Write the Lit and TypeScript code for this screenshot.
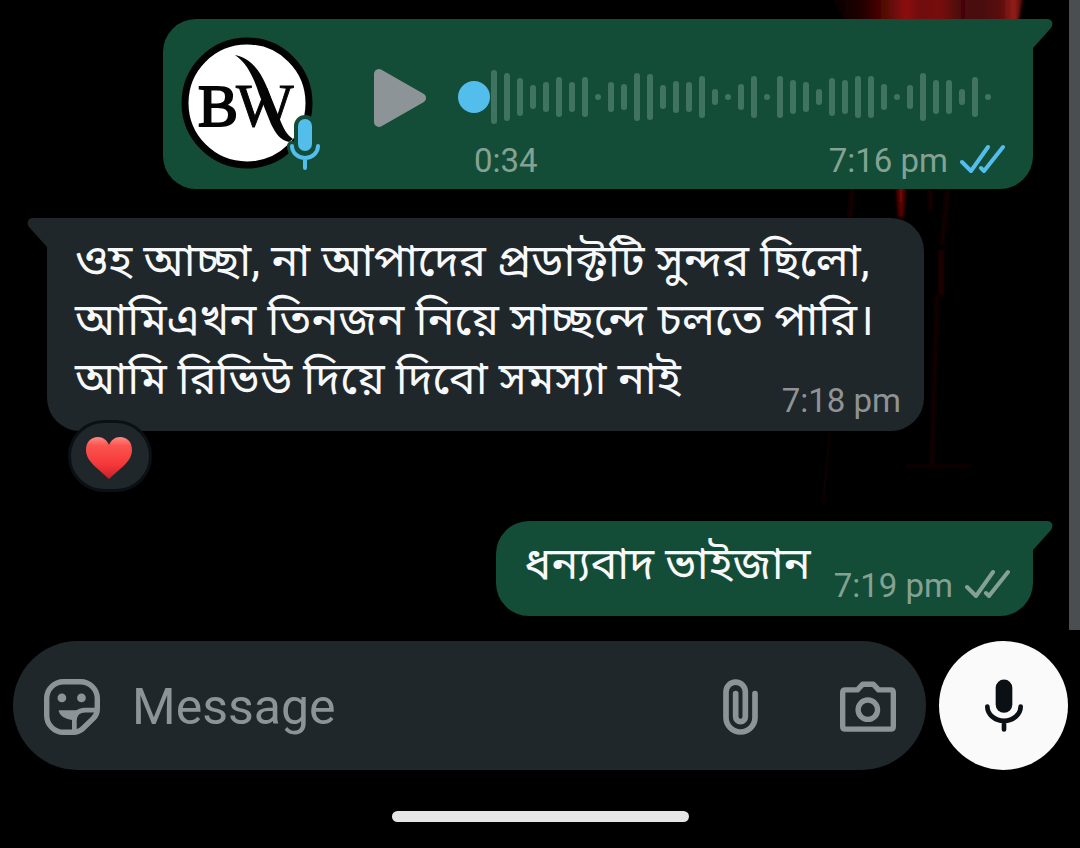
import { LitElement, html, svg, css, nothing } from "lit";
import { customElement, property } from "lit/decorators.js";

const LEVELS = [
  54, 48, 38, 24, 30, 40, 30, 40, 6, 30, 26, 48, 46, 24, 32, 30, 42, 16, 6, 26,
  42, 6, 42, 34, 30, 16, 38, 34, 42, 42, 26, 6, 24, 48, 34, 34, 16, 40, 6,
];

@customElement("message-status")
class MessageStatus extends LitElement {
  @property() time = "";
  @property() receipt = "";

  static styles = css`
    :host {
      display: flex;
      align-items: center;
      gap: 11px;
      font: 33px/40px Roboto, sans-serif;
      color: var(--meta);
      white-space: nowrap;
    }
    .ticks {
      display: block;
      width: 46px;
      height: 30px;
      margin-bottom: 4px;
      fill: none;
      stroke: currentColor;
      stroke-width: 4;
      stroke-linecap: round;
      stroke-linejoin: round;
    }
    .read {
      color: #53bdeb;
    }
  `;

  render() {
    return html`<time>${this.time}</time>
      ${this.receipt
        ? html`<svg class="ticks ${this.receipt}" viewBox="0 0 46 30" role="img" aria-label=${this.receipt}>
            <path d="M3 18L12 27L29 3M22 24L25 27L44 3" />
          </svg>`
        : nothing}`;
  }
}

@customElement("chat-bubble")
class ChatBubble extends LitElement {
  @property({ reflect: true }) side = "in";

  static styles = css`
    :host {
      display: block;
      position: relative;
      box-sizing: border-box;
      max-width: 100%;
      border-radius: 33px;
    }
    :host([side="in"]) {
      --fill: #1f272a;
      --meta: #8f9395;
      background: var(--fill);
      align-self: flex-start;
      border-top-left-radius: 0;
    }
    :host([side="out"]) {
      --fill: #144d37;
      --meta: #84a294;
      background: var(--fill);
      align-self: flex-end;
      border-top-right-radius: 0;
    }
    .tail {
      position: absolute;
      top: 0;
      width: 20px;
      height: 30px;
      fill: var(--fill);
    }
    :host([side="out"]) .tail {
      left: 100%;
    }
    :host([side="in"]) .tail {
      right: 100%;
      transform: scaleX(-1);
    }
  `;

  render() {
    return html`<slot></slot>
      <svg class="tail" viewBox="0 0 20 30" aria-hidden="true">
        <path d="M-1 0H14Q18 0 19 3Q20 6 18 9L0 29H-1Z" />
      </svg>`;
  }
}

@customElement("voice-note")
class VoiceNote extends LitElement {
  static styles = css`
    :host {
      display: flex;
      padding: 18px 28px 8px 18px;
    }
    .avatar {
      flex: none;
      display: block;
      width: 142px;
      height: 136px;
    }
    .mono {
      font-family: "Liberation Serif", serif;
      font-size: 61px;
      fill: #050505;
      stroke: #050505;
      stroke-width: 1;
    }
    .heavy {
      font-size: 60px;
      stroke-width: 2;
    }
    .play {
      flex: none;
      align-self: flex-start;
      width: 54px;
      height: 60px;
      margin: 31px 31px 0 50px;
      padding: 0;
      border: 0;
      background: none;
    }
    .play svg {
      display: block;
      fill: #8c9497;
      stroke: #8c9497;
      stroke-width: 10;
      stroke-linejoin: round;
    }
    .body {
      flex: 1;
      min-width: 0;
      display: flex;
      flex-direction: column;
    }
    .track {
      display: grid;
      align-items: center;
      height: 58px;
      margin: 31px 14px 15px 0;
    }
    .bars,
    .seek {
      grid-area: 1 / 1;
    }
    .bars {
      display: flex;
      align-items: center;
      justify-content: space-between;
      padding-left: 33px;
    }
    .bar {
      width: 6px;
      border-radius: 3px;
      background: #417460;
    }
    .seek {
      appearance: none;
      width: 100%;
      height: 32px;
      margin: 0;
      background: none;
    }
    .seek::-webkit-slider-thumb {
      appearance: none;
      width: 32px;
      height: 32px;
      border-radius: 50%;
      background: #53bdeb;
    }
    .foot {
      display: flex;
      justify-content: space-between;
      padding-left: 16px;
      font: 33px/40px Roboto, sans-serif;
      color: var(--meta);
    }
  `;

  render() {
    return html`
      <svg class="avatar" viewBox="0 0 142 136" role="img" aria-label="BW">
        <circle cx="66" cy="66" r="62" fill="#fff" stroke="#020202" stroke-width="7" />
        <text class="mono heavy" x="17" y="89">B</text>
        <text class="mono" x="55" y="89">W</text>
        <path d="M54 18C68 21 78 31 85 48L98 80C102 91 106 98 112 102L108 105C99 103 95 97 90 87L78 57C73 41 66 26 54 18Z" fill="#050505" />
        <g fill="none" stroke="#144d37" stroke-linecap="round">
          <path d="M124 89V107" stroke-width="22" />
          <path d="M111 109A13 12 0 0 0 137 109" stroke-width="10" />
          <path d="M124 121V131" stroke-width="6" />
        </g>
        <g fill="none" stroke="#53bdeb" stroke-linecap="round">
          <path d="M124 89V107" stroke-width="14" />
          <path d="M111 109A13 12 0 0 0 137 109M124 121V131" stroke-width="4" />
        </g>
      </svg>
      <button class="play" aria-label="Play">
        <svg width="54" height="60" viewBox="0 0 54 60"><path d="M6 6V54L48 30Z" /></svg>
      </button>
      <div class="body">
        <div class="track">
          <div class="bars" aria-hidden="true">
            ${LEVELS.map((h) => html`<span class="bar" style="height:${h}px"></span>`)}
          </div>
          <input class="seek" type="range" min="0" max="34" value="0" aria-label="Playback position" />
        </div>
        <div class="foot">
          <span>0:34</span>
          <message-status time="7:16 pm" receipt="read"></message-status>
        </div>
      </div>
    `;
  }
}

@customElement("text-message")
class TextMessage extends LitElement {
  @property() text = "";
  @property() time = "";
  @property() receipt = "";

  static styles = css`
    :host {
      display: block;
      padding: 13px 23px 10px 28px;
    }
    .text {
      display: flow-root;
      font: 45px/59px Roboto, "Noto Sans Bengali", "Noto Sans", sans-serif;
      color: #f7f8fa;
    }
    .status {
      float: right;
      margin: 32px 0 0 23px;
    }
  `;

  render() {
    return html`<div class="text" lang="bn">${this.text}<message-status class="status" time=${this.time} receipt=${this.receipt}></message-status></div>`;
  }
}

@customElement("message-composer")
class MessageComposer extends LitElement {
  static styles = css`
    :host {
      display: flex;
      align-items: center;
      gap: 13px;
      padding: 11px 12px 0 13px;
    }
    .field {
      flex: 1;
      min-width: 0;
      box-sizing: border-box;
      height: 129px;
      display: flex;
      align-items: center;
      padding: 2px 30px 0 31px;
      border-radius: 65px;
      background: #1f272a;
    }
    button {
      flex: none;
      display: block;
      padding: 0;
      border: 0;
      background: none;
      color: #8c9497;
    }
    svg {
      display: block;
      margin: auto;
      fill: none;
      stroke: currentColor;
      stroke-linecap: round;
      stroke-linejoin: round;
    }
    .input {
      flex: 1;
      min-width: 0;
      margin: 0 30px 0 32px;
      padding: 0;
      border: 0;
      outline: 0;
      background: none;
      font: 50px/60px Roboto, sans-serif;
      color: #f7f8fa;
    }
    .input::placeholder {
      color: #8c9497;
      opacity: 1;
    }
    .attach {
      margin-right: 82px;
    }
    .record {
      width: 129px;
      height: 129px;
      border-radius: 50%;
      background: #fafafa;
      color: #0b1014;
    }
  `;

  render() {
    return html`
      <div class="field">
        <button aria-label="Stickers">
          <svg width="56" height="56" viewBox="0 0 166 166" stroke-width="16">
            <path d="M58 8H108A50 50 0 0 1 158 58V88Q158 104 147 116L116 146Q104 158 86 158H58A50 50 0 0 1 8 108V58A50 50 0 0 1 58 8Z" />
            <path d="M152 92H122Q91 93 90 122V154" stroke-width="14" stroke-linecap="butt" />
            <path d="M44 93H110L92 122C68 122 50 112 44 97Z" fill="currentColor" stroke="none" />
            <g fill="currentColor" stroke="none"><circle cx="53" cy="56" r="13" /><circle cx="111" cy="56" r="13" /></g>
          </svg>
        </button>
        <input class="input" type="text" placeholder="Message" aria-label="Message" />
        <button class="attach" aria-label="Attach">
          <svg width="35" height="56" viewBox="0 0 105 167" stroke-width="17">
            <path d="M96 43V115A43.500 43.500 0 0 1 9 115V38A29 29 0 0 1 67 38V113A14.500 14.500 0 0 1 38 113V43" />
          </svg>
        </button>
        <button aria-label="Camera">
          <svg width="56" height="51" viewBox="0 0 167 151" stroke-width="16">
            <path d="M16 26H52L68 9H99L115 26H151Q159 26 159 34V135Q159 143 151 143H16Q8 143 8 135V34Q8 26 16 26Z" />
            <circle cx="83" cy="85" r="29" />
          </svg>
        </button>
      </div>
      <button class="record" aria-label="Record voice message">
        <svg width="38" height="53" viewBox="0 0 114 158" stroke-width="14">
          <path d="M57 26V76" stroke-width="50" />
          <path d="M7 82A50 43 0 0 0 107 82M57 125V151" />
        </svg>
      </button>
    `;
  }
}

@customElement("app-root")
class AppRoot extends LitElement {
  static styles = css`
    :host {
      display: flex;
      flex-direction: column;
      box-sizing: border-box;
      min-height: 100vh;
      position: relative;
      background: #000;
      overflow: hidden;
    }
    .wallpaper {
      position: absolute;
      top: 0;
      right: 50px;
      width: 240px;
      height: 520px;
    }
    .chat {
      flex: 1;
      display: flex;
      position: relative;
    }
    .list {
      flex: 1;
      min-width: 0;
      display: flex;
      flex-direction: column;
      gap: 29px;
      padding: 19px 36px 14px 47px;
    }
    .voice {
      width: 870px;
    }
    .received {
      width: 877px;
    }
    .group {
      display: flex;
      flex-direction: column;
    }
    .reaction {
      position: relative;
      align-self: flex-start;
      box-sizing: border-box;
      width: 84px;
      height: 72px;
      margin: -11px 0 0 21px;
      padding: 0;
      border: 3px solid #0b1014;
      border-radius: 36px;
      background: #1f272a;
    }
    .heart {
      display: block;
      margin: auto;
    }
    .scrollbar {
      width: 11px;
      background: #4b4e50;
    }
    .home {
      align-self: center;
      width: 297px;
      max-width: 60%;
      height: 11px;
      margin: 41px 0 26px;
      border-radius: 6px;
      background: #e6e6e6;
    }
  `;

  render() {
    return html`
      ${this.wallpaper()}
      <main class="chat">
        <div class="list">
          <chat-bubble class="voice" side="out"><voice-note></voice-note></chat-bubble>
          <div class="group">
            <chat-bubble class="received" side="in">
              <text-message
                text="ওহ আচ্ছা, না আপাদের প্রডাক্টটি সুন্দর ছিলো, আমিএখন তিনজন নিয়ে সাচ্ছন্দে চলতে পারি। আমি রিভিউ দিয়ে দিবো সমস্যা নাই"
                time="7:18 pm"
              ></text-message>
            </chat-bubble>
            <button class="reaction" aria-label="Heart reaction">
              <svg class="heart" width="48" height="46" viewBox="1 -3 48 46">
                <defs>
                  <linearGradient id="shine" x1="0" y1="0" x2="0" y2="1">
                    <stop offset="0" stop-color="#ff8a84" />
                    <stop offset=".2" stop-color="#fb5550" />
                    <stop offset=".65" stop-color="#f5383a" />
                    <stop offset="1" stop-color="#c9202a" />
                  </linearGradient>
                </defs>
                <path d="M24 9C22 4 18 1 13 1C6 1 1 6 1 14C1 26 14 33 24 43C34 33 47 26 47 14C47 6 42 1 35 1C30 1 26 4 24 9Z" fill="url(#shine)" />
              </svg>
            </button>
          </div>
          <chat-bubble side="out">
            <text-message text="ধন্যবাদ ভাইজান" time="7:19 pm" receipt="delivered"></text-message>
          </chat-bubble>
        </div>
        <div class="scrollbar" aria-hidden="true"></div>
      </main>
      <message-composer></message-composer>
      <div class="home" aria-hidden="true"></div>
    `;
  }

  private wallpaper() {
    return svg`<svg class="wallpaper" viewBox="790 0 240 520" aria-hidden="true">
      <defs>
        <linearGradient id="red" x1="0" x2="1" y1="0" y2="0">
          <stop offset="0" stop-color="#000" />
          <stop offset=".18" stop-color="#240202" />
          <stop offset=".3" stop-color="#560806" />
          <stop offset=".4" stop-color="#8e110c" />
          <stop offset=".46" stop-color="#700c0a" />
          <stop offset=".58" stop-color="#76100c" />
          <stop offset=".68" stop-color="#480606" />
          <stop offset=".78" stop-color="#480812" />
          <stop offset=".88" stop-color="#5a0a0c" />
          <stop offset=".95" stop-color="#962018" />
          <stop offset="1" stop-color="#300" />
        </linearGradient>
        <filter id="soft" x="-50%" y="-20%" width="200%" height="140%"><feGaussianBlur stdDeviation="1.500" /></filter>
      </defs>
      <g filter="url(#soft)" fill="none">
        <path d="M828 -5H1024L1018 24H848Z" fill="url(#red)" />
        <path d="M897 180H905L902 216H900Z" fill="#6b0808" stroke="#5a0606" stroke-width="3" />
        <path d="M852 188L850 218M930 188L931 210" stroke="#1a0604" stroke-width="4" />
        <path d="M948 188L942 245" stroke="#180604" stroke-width="4" />
        <path d="M941 250V295" stroke="#1a0404" stroke-width="6" />
        <path d="M937 295L932 466" stroke="#180503" stroke-width="4" />
        <path d="M906 466H972" stroke="#0e0202" stroke-width="3" />
        <path d="M830 432L823 503" stroke="#0b0502" stroke-width="3" />
      </g>
    </svg>`;
  }
}
